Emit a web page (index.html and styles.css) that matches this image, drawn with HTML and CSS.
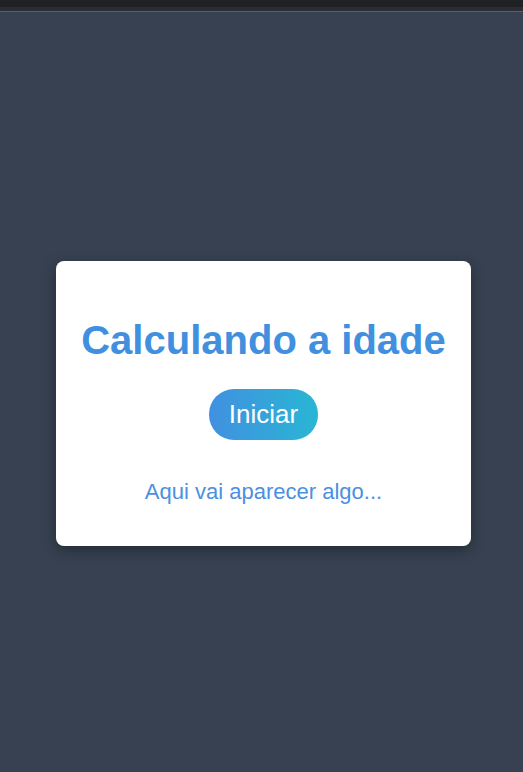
FILE: index.html
```html
<!DOCTYPE html>
<html lang="pt">
<head>
<meta charset="utf-8">
<title>Calculando a idade</title>
<link rel="stylesheet" href="styles.css">
</head>
<body>
<div class="topbar"><div class="topbar-dark"></div><div class="topbar-mid"></div><div class="topbar-line"></div></div>
<main class="stage">
  <section class="card">
    <h1 class="title">Calculando a idade</h1>
    <button class="btn" type="button">Iniciar</button>
    <p class="result">Aqui vai aparecer algo...</p>
  </section>
</main>
</body>
</html>
```

FILE: styles.css
```css
html, body {
  margin: 0;
  padding: 0;
}
body {
  background: #374151;
  font-family: "Liberation Sans", Arial, sans-serif;
  min-height: 772px;
}
.topbar-dark {
  height: 7px;
  background: #202124;
}
.topbar-mid {
  height: 4px;
  background: #2c2d31;
}
.topbar-line {
  height: 1px;
  background: #5f6064;
}
.stage {
  display: flex;
  justify-content: center;
  padding: 249px 0 0 4px;
}
.card {
  width: 415px;
  box-sizing: border-box;
  background: #ffffff;
  border-radius: 8px;
  box-shadow: 0 4px 14px rgba(0, 0, 0, 0.35);
  padding: 30px 20px 11px;
  display: flex;
  flex-direction: column;
  align-items: center;
  text-align: center;
}
.title {
  margin: 27px 0 26px;
  font-size: 40px;
  font-weight: bold;
  color: #4190e0;
  white-space: nowrap;
}
.btn {
  border: none;
  border-radius: 25px;
  padding: 10px 20px;
  font-family: "Liberation Sans", Arial, sans-serif;
  font-size: 26px;
  color: #ffffff;
  background: linear-gradient(90deg, #4190e0, #29b6d4);
  cursor: pointer;
}
.result {
  margin: 39px 0 30px;
  font-size: 22px;
  color: #4a90e2;
}
```
